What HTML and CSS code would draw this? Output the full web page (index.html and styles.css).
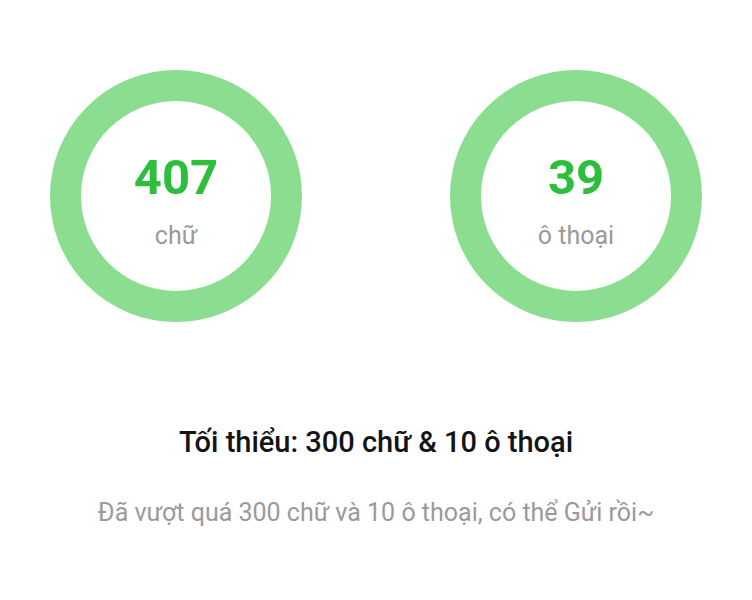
FILE: index.html
```html
<!DOCTYPE html>
<html lang="vi">
<head>
<meta charset="utf-8">
<title>Tiến độ</title>
<link rel="stylesheet" href="styles.css">
</head>
<body>
<main class="progress">
  <section class="rings">
    <div class="ring">
      <div class="ring-value">407</div>
      <div class="ring-label">chữ</div>
    </div>
    <div class="ring">
      <div class="ring-value">39</div>
      <div class="ring-label">ô thoại</div>
    </div>
  </section>
  <h2 class="requirement">Tối thiểu: 300 chữ &amp; 10 ô thoại</h2>
  <p class="hint">Đã vượt quá 300 chữ và 10 ô thoại, có thể Gửi rồi~</p>
</main>
</body>
</html>
```
FILE: styles.css
```css
html, body {
  margin: 0;
  padding: 0;
  background: #ffffff;
  font-family: Roboto, "Noto Sans", sans-serif;
}

.progress {
  display: flex;
  flex-direction: column;
  align-items: center;
  padding-top: 70px;
}

.rings {
  display: flex;
  justify-content: center;
  gap: 148px;
}

.ring {
  box-sizing: border-box;
  width: 252px;
  height: 252px;
  border-radius: 50%;
  border: 31px solid #8bdd8f;
  display: flex;
  flex-direction: column;
  align-items: center;
  justify-content: center;
  padding-top: 9px;
}

.ring-value {
  color: #2dbf3b;
  font-size: 49px;
  font-weight: 700;
  line-height: 56px;
}

.ring-label {
  color: #9a9a9a;
  font-size: 25px;
  line-height: 30px;
  margin-top: 15px;
}

.requirement {
  margin: 103px 0 0;
  color: #141414;
  font-size: 29px;
  font-weight: 500;
  line-height: 34px;
}

.hint {
  margin: 39px 0 0;
  color: #9a9a9a;
  font-size: 25px;
  line-height: 30px;
}
```
